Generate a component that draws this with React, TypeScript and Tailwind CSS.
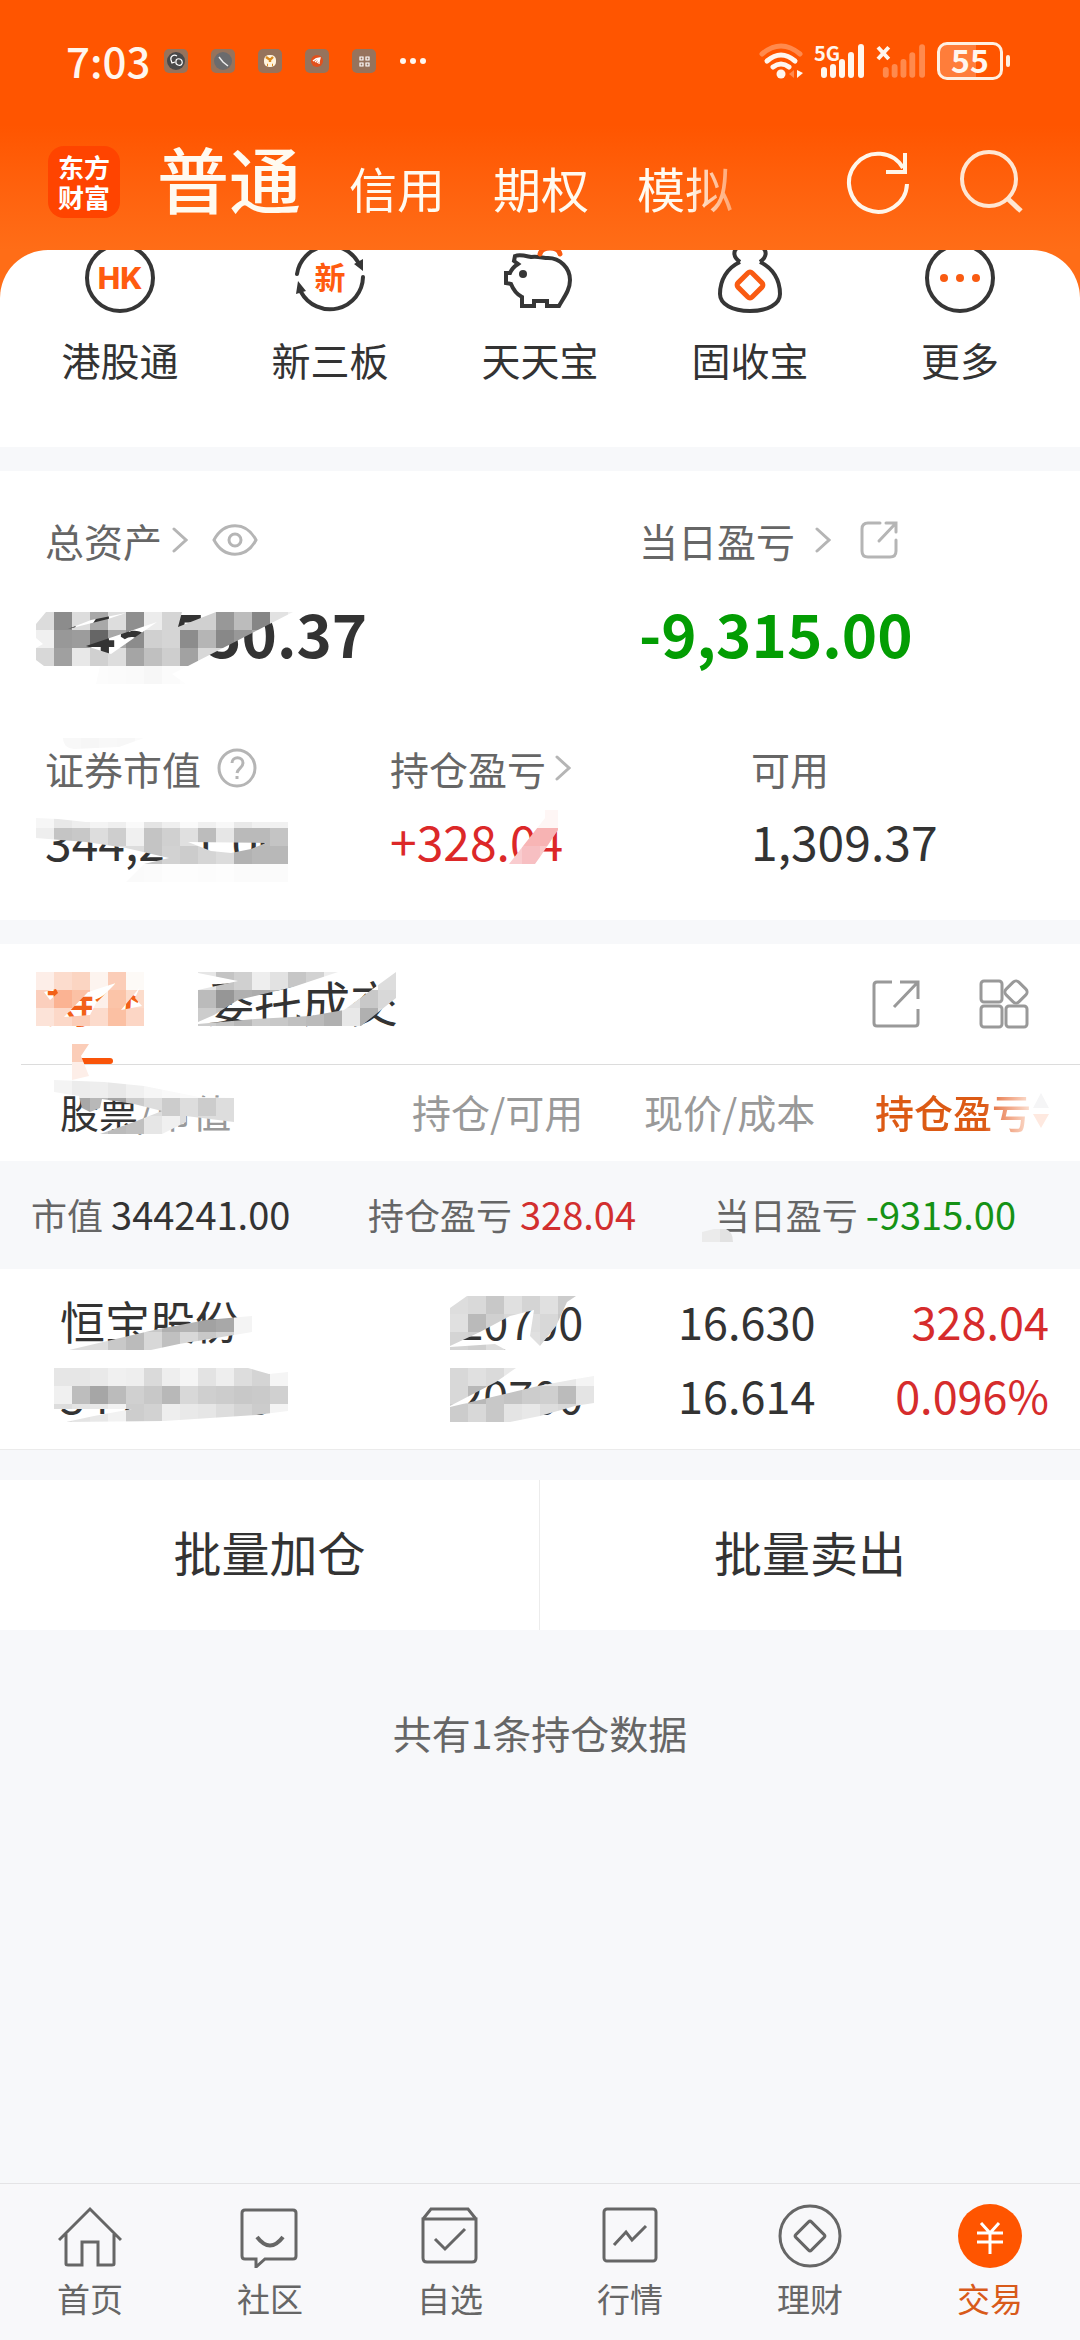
import { useState } from "react";
import type { ReactNode } from "react";
import clsx from "clsx";

const CELL = 18;

type MosaicProps = {
  id: string;
  rows: string[];
  shape: string;
  className: string;
};

// 18px privacy mosaic, cut to a free-hand brush shape.
// two-digit entries are greys, six-digit entries are full colours
const Mosaic = ({ id, rows, shape, className }: MosaicProps) => (
  <svg
    className={clsx("absolute overflow-visible pointer-events-none", className)}
    width={rows[0].split(" ").length * CELL}
    height={rows.length * CELL}
    aria-hidden="true">
    <clipPath id={id}>
      <path clipRule="evenodd" d={shape} />
    </clipPath>
    <g clipPath={`url(#${id})`} shapeRendering="crispEdges">
      {rows.map((row, y) =>
        row
          .split(" ")
          .map((c, x) => (
            <rect
              key={`${x}-${y}`}
              x={x * CELL}
              y={y * CELL}
              width={CELL}
              height={CELL}
              fill={`#${c.length === 2 ? c + c + c : c}`}
            />
          ))
      )}
    </g>
  </svg>
);

const Chevron = () => (
  <svg width="16" height="26" viewBox="0 0 16 26" fill="none" stroke="#b5b5b5" strokeWidth="3" strokeLinecap="round">
    <path d="M2 2l12 11L2 24" />
  </svg>
);

const AppDots = () => (
  <div className="flex items-center gap-[23px]">
    <svg width="24" height="24" viewBox="0 0 24 24" fill="none">
      <rect width="24" height="24" rx="5" fill="#96735c" />
      <circle cx="12" cy="12" r="9" fill="#494949" />
      <path d="M13 7c-3-2-7 0-6 4l1 3 3-1M12 12c0-3 5-3 6 0s-1 5-4 4-2-2-2-4z" stroke="#fff" strokeWidth="1.2" />
    </svg>
    <svg width="24" height="24" viewBox="0 0 24 24" fill="none">
      <rect width="24" height="24" rx="5" fill="#96735c" />
      <circle cx="12" cy="12" r="9" fill="#6b6b6d" />
      <path d="M8 8l4 5 5 4" stroke="#eee" strokeWidth="1.5" />
    </svg>
    <svg width="24" height="24" viewBox="0 0 24 24" fill="none">
      <rect width="24" height="24" rx="5" fill="#96735c" />
      <rect x="6" y="6" width="12" height="12" rx="5" fill="#fff3dd" />
      <path d="M8 8l4 3 3-3M12 11v2M9 16h1M14 16h1" stroke="#d98a1e" strokeWidth="2.4" />
    </svg>
    <svg width="24" height="24" viewBox="0 0 24 24" fill="none">
      <rect width="24" height="24" rx="5" fill="#96735c" />
      <circle cx="12" cy="12" r="6" fill="#e2501c" />
      <path d="M8 12q3-3 7-3-1 3-1 6M10 13q2-2 4-3M12 14l2-3" stroke="#fff" strokeWidth="1.3" />
    </svg>
    <svg width="24" height="24" viewBox="0 0 24 24" fill="none">
      <rect width="24" height="24" rx="5" fill="#96735c" />
      <path d="M8 8h3v3H8zM14 8h3v3h-3zM8 14h3v3H8zM14 14h3v3h-3z" stroke="#fff" strokeWidth="1.2" />
    </svg>
    <svg width="28" height="8" viewBox="0 0 28 8" fill="#fff6ee">
      <circle cx="4" cy="4" r="3" />
      <circle cx="14" cy="4" r="3" />
      <circle cx="24" cy="4" r="3" />
    </svg>
  </div>
);

const SignalBars = () => (
  <path d="M10 32v-5M19 32v-8M28 32V19M37 32V12M47 32V4" strokeWidth="6" strokeLinecap="round" />
);

const StatusBar = () => (
  <div className="flex h-[122px] items-center justify-between pl-[66px] pr-[70px] text-[#fff6ee]">
    <div className="flex items-center gap-[14px]">
      <span className="pb-[2px] text-[42px] font-medium leading-none">7:03</span>
      <AppDots />
    </div>
    <div className="flex items-center gap-[11px]">
      <svg width="44" height="36" viewBox="0 0 44 36" fill="none" stroke="#fff6ee" strokeWidth="5" strokeLinecap="round">
        <path d="M3 11q19-16 38 0" stroke="#ff8a4d" />
        <path d="M8 18q14-12 28 0M14 24q8-6 16 0" />
        <circle cx="22" cy="31" r="4.5" fill="#fff6ee" stroke="none" />
        <path d="M35 27v8l-5-4z" fill="#ff8a4d" stroke="none" />
        <path d="M38 27v8l6-5z" fill="#fff6ee" stroke="none" />
      </svg>
      <div className="relative">
        <svg width="51" height="36" viewBox="0 0 51 36" stroke="#fff6ee">
          <SignalBars />
        </svg>
        <span className="absolute left-0 top-0 text-[20px] font-bold leading-none">5G</span>
      </div>
      <svg width="50" height="36" viewBox="0 0 51 36" stroke="#ff8a4d">
        <SignalBars />
        <path d="M2 4l11 12M13 4L2 16" stroke="#fff6ee" strokeWidth="4" />
      </svg>
      <div className="flex items-center gap-[3px]">
        <div className="flex h-[38px] w-[66px] items-center justify-center rounded-[10px] border-[3px] border-[#fff0e2] bg-linear-to-r from-[#ff7d3a] from-60% to-[#ff5500] to-60% pb-1 text-[32px] font-bold leading-none">
          55
        </div>
        <span className="h-3 w-1 rounded-full bg-[#fff0e2]" />
      </div>
    </div>
  </div>
);

const accounts = ["普通", "信用", "期权", "模拟"];

const Header = () => {
  const [account, setAccount] = useState("普通");
  return (
    <header className="bg-linear-to-b from-[#ff5500] from-50% to-[#ff6d17]">
      <StatusBar />
      <div className="flex h-[128px] items-center pb-2 pl-12 pr-[57px]">
        <div className="flex h-[72px] w-[72px] items-center rounded-2xl bg-[#ff4400] px-[10px] text-[26px] font-bold leading-[30px] text-white">
          东方财富
        </div>
        <nav className="ml-[37px] flex flex-1 items-baseline gap-12 whitespace-nowrap text-[#fffaf0] [mask-image:linear-gradient(to_right,black_530px,transparent_610px)]">
          {accounts.map((name) => (
            <button
              key={name}
              type="button"
              onClick={() => setAccount(name)}
              className={clsx(
                "leading-[88px]",
                name === account ? "text-[72px] font-medium" : "text-[48px]"
              )}>
              {name}
            </button>
          ))}
        </nav>
        <div className="flex items-center gap-12">
          <button type="button" aria-label="刷新">
            <svg
              className="overflow-visible"
              width="64"
              height="66"
              viewBox="0 0 64 66"
              fill="none"
              stroke="#fff6ea"
              strokeWidth="4">
              <path d="M60 35A29 29 0 1 1 56 19" />
              <path d="M58 4v19H39" />
            </svg>
          </button>
          <button type="button" aria-label="搜索">
            <svg width="64" height="66" viewBox="0 0 64 66" fill="none" stroke="#ffe6d2" strokeWidth="4">
              <circle cx="30" cy="30" r="27" />
              <path d="M48 49l14 13" strokeWidth="5" />
            </svg>
          </button>
        </div>
      </div>
    </header>
  );
};

const shortcuts: { label: string; icon: ReactNode }[] = [
  {
    label: "港股通",
    icon: (
      <>
        <circle cx="36" cy="36" r="33" />
        <text x="36" y="47" textAnchor="middle" fontSize="30" fontWeight="800" fontFamily="Inter" fill="#ff5b10" stroke="none">
          HK
        </text>
      </>
    ),
  },
  {
    label: "新三板",
    icon: (
      <>
        <path d="M3 32a33 33 0 0 1 61-12M69 35a33 33 0 0 1-62 15" strokeLinecap="round" />
        <path d="M60 22l9-5v12zM2 52l2-13 8 10z" fill="#363636" stroke="none" />
        <text x="36" y="47" textAnchor="middle" fontSize="31" fontWeight="700" fill="#ff5b10" stroke="none">
          新
        </text>
      </>
    ),
  },
  {
    label: "天天宝",
    icon: (
      <>
        <path d="M27 15c7-1 12 1 17 1 12 0 22 10 22 22 0 10-6 17-11 26H43v-5H30v5H18V55c-6-3-9-8-11-13l-5-1V31h4c2-5 5-7 8-9l-4-3 1-5c5-2 11 0 16 1z" />
        <circle cx="19" cy="32" r="4" fill="#363636" stroke="none" />
        <path d="M36 12c2-8 18-8 20 0" stroke="#f95b12" strokeWidth="5" strokeLinecap="round" />
      </>
    ),
  },
  {
    label: "固收宝",
    icon: (
      <>
        <path d="M26 20c-7-5-8-12 0-16h20c8 4 7 11 0 16M26 20C13 26 6 38 6 52c0 10 12 17 30 17s30-7 30-17c0-14-7-26-20-32" />
        <rect x="26" y="33" width="20" height="20" rx="3" transform="rotate(45 36 43)" stroke="#f95b12" strokeWidth="5" />
      </>
    ),
  },
  {
    label: "更多",
    icon: (
      <>
        <circle cx="36" cy="36" r="33" />
        <g fill="#f95b12" stroke="none">
          <circle cx="20" cy="36" r="4" />
          <circle cx="36" cy="36" r="4" />
          <circle cx="52" cy="36" r="4" />
        </g>
      </>
    ),
  },
];

const Shortcuts = () => (
  <div className="bg-[#ff6d17]">
    <div className="grid grid-cols-5 overflow-hidden rounded-t-[48px] bg-white px-[15px] pb-[59px]">
      {shortcuts.map(({ label, icon }) => (
        <button key={label} type="button" className="-mt-2 flex flex-col items-center gap-4">
          <svg width="72" height="72" viewBox="0 0 72 72" fill="none" stroke="#363636" strokeWidth="4">
            {icon}
          </svg>
          <span className="text-[39px] leading-[58px]">{label}</span>
        </button>
      ))}
    </div>
  </div>
);

const label = "flex h-14 items-center text-[39px] text-[#666]";
const amount = "h-[60px] text-[48px] leading-[60px]";

const Assets = () => (
  <section className="relative bg-white px-[45px] pb-[50px] pt-[41px]">
    <div className="grid grid-cols-[3fr_2fr]">
      <div>
        <div className={label}>
          总资产
          <span className="ml-[10px] mr-6"><Chevron /></span>
          <button type="button" aria-label="显示金额">
            <svg width="46" height="32" viewBox="0 0 46 32" fill="none" stroke="#b5b5b5" strokeWidth="3">
              <path d="M2 16C12-3 34-3 44 16 34 35 12 35 2 16z" />
              <circle cx="23" cy="16" r="6" />
            </svg>
          </button>
        </div>
        <div className="mt-7 h-[72px] text-[60px] font-bold leading-[72px]">345,550.37</div>
      </div>
      <div>
        <div className={label}>
          当日盈亏
          <span className="ml-5 mr-7"><Chevron /></span>
          <button type="button" aria-label="分享">
            <svg width="40" height="40" viewBox="0 0 40 40" fill="none" stroke="#b5b5b5" strokeWidth="3" strokeLinecap="round">
              <path d="M21 3H9Q3 3 3 9v22q0 6 6 6h22q6 0 6-6V20M27 3h10v9M37 3L20 21" />
            </svg>
          </button>
        </div>
        <div className="mt-7 h-[72px] text-[60px] font-bold leading-[72px] text-[#039d03]">-9,315.00</div>
      </div>
    </div>
    <div className="mt-[72px] grid grid-cols-[345fr_361fr_284fr]">
      <div>
        <div className={label}>
          证券市值
          <svg className="ml-4" width="40" height="40" viewBox="0 0 40 40" fill="none" stroke="#b5b5b5" strokeWidth="3">
            <circle cx="20" cy="20" r="18" />
            <path d="M15 15c0-7 11-7 11 0 0 5-5 5-6 10M20 28v3" />
          </svg>
        </div>
        <div className={clsx(amount, "mt-[14px]")}>344,241.00</div>
      </div>
      <div>
        <div className={label}>
          持仓盈亏
          <span className="ml-[9px]"><Chevron /></span>
        </div>
        <div className={clsx(amount, "mt-[14px] text-[#dc2828]")}>+328.04</div>
      </div>
      <div>
        <div className={label}>可用</div>
        <div className={clsx(amount, "mt-[14px]")}>1,309.37</div>
      </div>
    </div>

    <Mosaic
      id="m-total"
      className="left-9 top-[141px]"
      rows={[
        "dc 8c dd a8 dd 8f ec d5 d0 d0 98 bc 86 e2 f0",
        "f0 98 9c 66 a8 8c d0 d5 8c b5 88 98 a8 c8 f0",
        "d8 a0 e8 d0 dd a5 c0 ce a2 d8 d8 d8 d8 d8 d8",
        "ff ff ff fc fb fa f7 fb fd fd ff ff ff ff ff",
      ]}
      shape="M10 0H257L152 54L136 62L150 72H60L64 54H8L0 48V36L7 32L0 26V12zM142 15L146 0H180zM50 34L121 10L75 42zM32 17L55 8L90 1L72 7z"
    />
    <Mosaic
      id="m-strip"
      className="left-[63px] top-[267px]"
      rows={["f8 f6 f8 f7 fb"]}
      shape="M0 0H81L56 9L11 11Q0 10 0 0z"
    />
    <Mosaic
      id="m-market"
      className="left-9 top-[339px]"
      rows={[
        "f6 e8 ee f4 ef fa e4 ef fa f0 f8 e9 f1 f1",
        "ee c4 c8 dd ce f0 c4 d0 e0 bc e6 ba ba c4",
        "f8 e8 ee f0 e0 dd c4 d2 cc d5 dc b2 b8 b8",
        "ff fe fd fc fc fa fb fd fd fc fd fb fb fb",
      ]}
      shape="M0 8L22 9L50 12H252V72H90L108 54L133 48L90 38L50 32L0 28zM152 32L230 33L215 39L195 43L175 41z"
    />
    <Mosaic
      id="m-profit"
      className="left-[504px] top-[339px]"
      rows={["ff fef6f5 fef6f5", "f9c8c8 f8b5b5 f7b3b3", "f9cccf f7bfc2 fac8c8"]}
      shape="M5 54L41 8V0H54V20L36 47L31 54z"
    />
  </section>
);

const tabs = ["持仓", "委托成交"];

const TabBar = () => {
  const [tab, setTab] = useState("持仓");
  return (
    <div className="ml-[21px] flex h-[121px] items-stretch justify-between border-b border-[#dcdcdc] pl-[25px] pr-[51px]">
      <div className="flex gap-16 text-[48px]">
        {tabs.map((name) => (
          <button
            key={name}
            type="button"
            onClick={() => setTab(name)}
            className={clsx("relative pb-[6px]", name === tab && "font-medium text-[#f26018]")}>
            {name}
            {name === tab && (
              <span className="absolute bottom-0 left-[29px] h-[6px] w-[38px] rounded-full bg-[#f95409]" />
            )}
          </button>
        ))}
      </div>
      <div className="flex items-center gap-[59px]">
        <button type="button" aria-label="分享持仓">
          <svg width="48" height="48" viewBox="0 0 48 48" fill="none" stroke="#999" strokeWidth="3">
            <path d="M20 2H5Q2 2 2 5v38q0 3 3 3h38q3 0 3-3V29M28 2h18v17M46 2L22 27" />
          </svg>
        </button>
        <button type="button" aria-label="更多功能">
          <svg width="50" height="50" viewBox="0 0 50 50" fill="none" stroke="#999" strokeWidth="3">
            <rect x="2" y="2" width="21" height="21" rx="3" />
            <rect x="2" y="27" width="21" height="21" rx="3" />
            <rect x="27" y="27" width="21" height="21" rx="3" />
            <rect x="28" y="4" width="18" height="18" rx="4" transform="rotate(45 37 13)" />
          </svg>
        </button>
      </div>
    </div>
  );
};

const Holdings = () => (
  <section className="relative bg-white">
    <TabBar />
    <table className="w-full table-fixed text-right">
      <thead className="text-[39px] text-[#999]">
        <tr className="h-24">
          <th className="w-[33%] pb-1 pl-[60px] text-left font-normal">
            <span className="text-[#333]">股票</span>/市值
          </th>
          <th className="w-[21%] pb-1 font-normal">持仓/可用</th>
          <th className="w-[21.5%] pb-1 font-normal">现价/成本</th>
          <th className="pb-1 pr-[31px] font-normal">
            <span className="flex items-center justify-end gap-[2px]">
              <span className="bg-linear-to-r from-[#dc5a14] from-70% to-[#fbe3d6] bg-clip-text font-medium text-transparent">
                持仓盈亏
              </span>
              <svg width="16" height="36" viewBox="0 0 16 36">
                <path d="M8 0l8 15H0z" fill="#f5f5f6" />
                <path d="M0 21h16L8 35z" fill="#fee9e0" />
              </svg>
            </span>
          </th>
        </tr>
      </thead>
      <tbody>
        <tr className="h-[108px] bg-[#f7f8fa] text-[36px]">
          <td colSpan={4} className="pb-1 pl-[31px] pr-16">
            <div className="flex justify-between text-[#666]">
              <span>
                市值 <span className="text-[38px] text-[#333]">344241.00</span>
              </span>
              <span>
                持仓盈亏 <span className="text-[38px] text-[#d22f2f]">328.04</span>
              </span>
              <span>
                当日盈亏 <span className="text-[38px] text-[#159215]">-9315.00</span>
              </span>
            </div>
          </td>
        </tr>
        <tr className="border-b border-[#ebebeb] text-[45px] leading-[74px]">
          <td className="pb-[17px] pl-[60px] pt-[15px] text-left">
            恒宝股份
            <br />
            344241.00
          </td>
          <td className="pb-[17px] pt-[15px]">
            20700
            <br />
            20700
          </td>
          <td className="pb-[17px] pt-[15px]">
            16.630
            <br />
            16.614
          </td>
          <td className="pb-[17px] pr-[31px] pt-[15px] text-[#d62c2c]">
            328.04
            <br />
            0.096%
          </td>
        </tr>
      </tbody>
    </table>

    <Mosaic
      id="m-tab"
      className="left-9 top-[28px]"
      rows={[
        "fdeee8 fcdccd fbd5c2 fdf4ef fbcdb8 fdfaf7",
        "fbcfbd fbb393 fbc1a5 fdf0ea fbc4a8 fcdccb",
        "fce3d8 fcd8c8 fbcdb8 fcdbcc fbc0a3 fcd6c5",
      ]}
      shape="M0 0H108V54H0zM8 20L20 17L22 21L14 28zM28 45L52 20L80 11L60 31L54 43zM85 38L95 26L104 15L99 26L106 34z"
    />
    <Mosaic
      id="m-line"
      className="left-[72px] top-[100px]"
      rows={["fbcdb8", "fdeee8"]}
      shape="M0 0H17L9 12L17 32L0 36z"
    />
    <Mosaic
      id="m-orders"
      className="left-[198px] top-[28px]"
      rows={[
        "e6 c4 d0 ee e2 c6 d2 ed da ff dd",
        "bb 96 b0 ac b8 c6 d2 d2 e0 c8 d8",
        "cc c4 b8 cc c8 c0 bb b0 e8 b0 dd",
      ]}
      shape="M0 0H140L95 15L40 28L16 43L0 50zM0 1L40 9L0 18zM0 52L57 47L112 44L146 38L198 0V26L163 54H0z"
    />
    <Mosaic
      id="m-head"
      className="left-[54px] top-[136px]"
      rows={[
        "f4 ec ee e8 f0 f6 f9 fb fb f8",
        "e8 a8 b8 a4 cc dd cc dd cc dd",
        "c8 c8 cc bb c0 e6 f0 dd dd dd",
      ]}
      shape="M0 0L50 2L90 6L145 17L180 18V42L132 36L132 42L108 54H46L80 42L108 31L80 24L48 19L46 28L36 32L28 28L25 16L0 12z"
    />
    <Mosaic
      id="m-sum"
      className="left-[702px] top-[285px]"
      rows={["eb e2"]}
      shape="M0 3L12 0H24Q31 3 31 13H0z"
    />
    <Mosaic
      id="m-name"
      className="left-[54px] top-[370px]"
      rows={[
        "dd dd dd dd dd c8 b0 b4 a2 a8 f4",
        "dd dd dd c8 bb d8 c0 d8 c8 d4 f4",
      ]}
      shape="M15 36L100 16L152 6L198 2V18L180 21L125 30L97 36z"
    />
    <Mosaic
      id="m-value"
      className="left-[54px] top-[424px]"
      rows={[
        "e6 e6 e9 f0 ee da ee f5 e3 ee dd d4 f5",
        "f0 bd a6 bb d0 c8 b8 d8 cf cc c8 ca d0",
        "dd e4 e8 f2 cd d2 ee e9 e6 dd d4 cc f4",
      ]}
      shape="M0 0H194L215 6L234 4V43L202 47L110 53L12 54L40 48L78 41H0z"
    />
    <Mosaic
      id="m-qty"
      className="left-[450px] top-[352px]"
      rows={[
        "dd d9 c8 e0 d4 e0 cc",
        "e0 ba d0 d8 dd d8 c8",
        "d4 cf dd c8 e0 d8 d8",
      ]}
      shape="M0 12L17 0H126L117 6L106 30L90 50L80 40L84 14L60 20L30 36L0 50zM0 51L45 48L56 54H0z"
    />
    <Mosaic
      id="m-avail"
      className="left-[450px] top-[424px]"
      rows={[
        "d8 e0 da e8 e8 e8 e8 f4",
        "d8 b8 c8 c4 cc cf bb e4",
        "cc d8 c8 e4 e8 dd d8 e8",
      ]}
      shape="M0 0H66L46 14L0 38zM0 39L88 18L126 11L144 8V35L125 38L90 48L60 54H0z"
    />
  </section>
);

const navItems: { label: string; icon: ReactNode }[] = [
  {
    label: "首页",
    icon: <path d="M1 36L32 5l31 31M8 30v30q0 1 2 1h14V38h16v23h14q2 0 2-1V30" />,
  },
  {
    label: "社区",
    icon: (
      <>
        <path d="M7 6h48q3 0 3 3v43q0 3-3 3H27l-9 8v-8H7q-3 0-3-3V9q0-3 3-3z" />
        <path d="M19 33q13 17 26 0" strokeWidth="4" />
      </>
    ),
  },
  {
    label: "自选",
    icon: (
      <>
        <path d="M5 15h53v39q0 4-4 4H9q-4 0-4-4zM5 15l8-10h37l8 10" />
        <path d="M17 35l10 10 20-20" />
      </>
    ),
  },
  {
    label: "行情",
    icon: (
      <>
        <rect x="6" y="5" width="52" height="52" rx="3" />
        <path d="M16 41l12-13 6 8 14-14" />
      </>
    ),
  },
  {
    label: "理财",
    icon: (
      <>
        <circle cx="32" cy="32" r="30" />
        <rect x="21" y="21" width="22" height="22" rx="2" transform="rotate(45 32 32)" />
      </>
    ),
  },
  {
    label: "交易",
    icon: (
      <>
        <circle cx="32" cy="32" r="32" fill="#ff5500" stroke="none" />
        <path d="M23 19l9 10 9-10M19 29h26M19 38h26M32 28v22" stroke="#fff" />
      </>
    ),
  },
];

const BottomNav = () => {
  const [active, setActive] = useState("交易");
  return (
    <nav className="mt-auto grid grid-cols-6 border-t border-[#e4e4e6] bg-[#f8f8fa] py-5">
      {navItems.map((item) => (
        <button
          key={item.label}
          type="button"
          onClick={() => setActive(item.label)}
          className="flex flex-col items-center gap-2">
          <svg width="64" height="64" viewBox="0 0 64 64" fill="none" stroke="#666" strokeWidth="3">
            {item.icon}
          </svg>
          <span
            className={clsx(
              "text-[33px] leading-[44px]",
              item.label === active ? "text-[#d85a1a]" : "text-[#666]"
            )}>
            {item.label}
          </span>
        </button>
      ))}
    </nav>
  );
};

const App = () => (
  <div className="flex min-h-screen flex-col bg-[#f7f8fa] font-['Noto_Sans_CJK_SC',sans-serif] text-[#333]">
    <Header />
    <main className="flex flex-col gap-6">
      <Shortcuts />
      <Assets />
      <Holdings />
      <div className="mt-[6px] grid grid-cols-2 bg-white text-[48px]">
        <button type="button" className="h-[150px] border-r border-[#ececec] pb-2">
          批量加仓
        </button>
        <button type="button" className="h-[150px] pb-2">
          批量卖出
        </button>
      </div>
      <p className="mt-[50px] text-center text-[39px] leading-[56px] text-[#666]">共有1条持仓数据</p>
    </main>
    <BottomNav />
  </div>
);

export default App;
